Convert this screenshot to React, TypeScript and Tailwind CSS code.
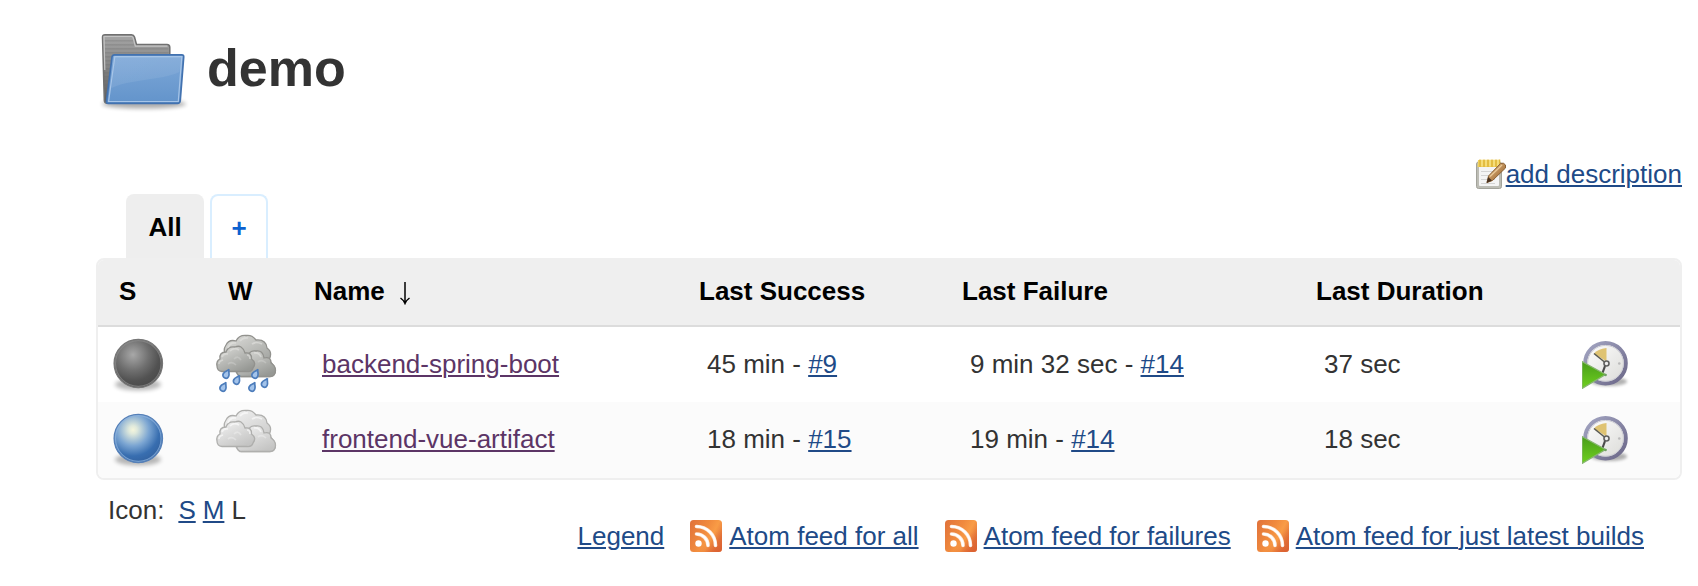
import React from "react";

const linkClass = "text-[#204a87] underline decoration-2 underline-offset-2";

function FolderIcon() {
  return (
    <svg viewBox="0 0 96 96" className="size-24 shrink-0" aria-hidden="true">
      <defs>
        <linearGradient id="folder-back" x1="0" y1="0" x2="0" y2="1">
          <stop offset="0" stopColor="#a6a6a6" />
          <stop offset="0.35" stopColor="#8c8c8c" />
          <stop offset="1" stopColor="#5c5c5c" />
        </linearGradient>
        <linearGradient id="folder-front" x1="0" y1="0" x2="0" y2="1">
          <stop offset="0" stopColor="#7ea8d8" />
          <stop offset="1" stopColor="#6394cb" />
        </linearGradient>
        <linearGradient id="folder-gloss" x1="0" y1="0" x2="1" y2="1">
          <stop offset="0" stopColor="#fff" stopOpacity="0.1" />
          <stop offset="1" stopColor="#fff" stopOpacity="0.06" />
        </linearGradient>
        <pattern id="folder-lines" width="4" height="4" patternUnits="userSpaceOnUse">
          <rect width="4" height="1.6" fill="#666" opacity="0.25" />
        </pattern>
        <filter id="folder-blur" x="-20%" y="-100%" width="140%" height="300%">
          <feGaussianBlur stdDeviation="2.2" />
        </filter>
      </defs>
      <ellipse cx="48" cy="84" rx="42" ry="4.5" fill="#000" opacity="0.32" filter="url(#folder-blur)" />
      <path d="M11 83.300 Q8.500 83.300 8.300 80.500 L6.500 17 Q6.500 14.800 9 14.800 H35.500 Q37.800 14.800 38.500 17 L40.500 24.500 H71 Q73.800 24.500 73.800 27.500 V81 Z" fill="url(#folder-back)" stroke="#707070" strokeWidth="1.500" />
      <path d="M8.500 70 L7.500 18 H37 L40 27 H72.500 V70 Z" fill="url(#folder-lines)" />
      <path d="M8.800 50 L8 16.500 H35.500 Q36.800 16.500 37.200 18 L39.300 26.200 H71.500" fill="none" stroke="#c4c4c4" strokeWidth="1.200" />
      <path d="M18.500 34.800 H85.800 Q87.900 34.800 87.700 36.800 L84.200 81 Q84 83.300 81.500 83.300 H12 Q10.300 83.300 10.500 81 L16 37 Q16.300 34.800 18.500 34.800 Z" fill="url(#folder-front)" stroke="#4272b0" strokeWidth="1.700" />
      <path d="M18.800 36.600 H85.800 L82.300 81.500 H12.600 Z" fill="none" stroke="#a7c5e8" strokeWidth="1.200" />
      <path d="M18.800 37 H85 L83.500 52 Q74 56 61 58 C43 61 28 62 15.500 68 Z" fill="url(#folder-gloss)" />
    </svg>
  );
}

function NotepadIcon() {
  return (
    <svg viewBox="0 0 32 32" className="size-8 shrink-0" aria-hidden="true">
      <defs>
        <linearGradient id="note-pencil" x1="0" y1="0" x2="1" y2="1">
          <stop offset="0.2" stopColor="#d9b07c" />
          <stop offset="0.8" stopColor="#a06a32" />
        </linearGradient>
      </defs>
      <rect x="2.500" y="4" width="25" height="26.500" rx="2" fill="#bdbdb5" stroke="#a3a39b" />
      <rect x="5" y="6" width="20" height="22" rx="1" fill="#f4f4f4" />
      <path d="M7 13.500H21M7 17.500H18M7 21.500H21M7 25.500H21" stroke="#d4d4d4" strokeWidth="1.200" />
      <path d="M4 2 H26 L26.500 9 H3.500 Z" fill="#efd15e" />
      <path d="M6 1.500V9M10 1.500V9M14 1.500V9M18 1.500V9M22 1.500V9M25.500 1.500V8" stroke="#e0b63a" strokeWidth="1.500" />
      <path d="M8 1.500V8M12 1.500V8M16 1.500V8M20 1.500V8M24 1.500V8" stroke="#f8e489" strokeWidth="1.300" />
      <path d="M13 24.500 L14.500 18 L26.500 5.500 Q29.500 4 31.500 7 V10 L18.500 22.500 Z" fill="url(#note-pencil)" stroke="#8a6135" />
      <path d="M16 18.500 L28 7" stroke="#e8c897" strokeWidth="1.400" />
      <path d="M12.500 25 L14.200 19 L18 22.500 Z" fill="#4a3320" />
    </svg>
  );
}

function BallIcon({ tone }: { tone: "gray" | "blue" }) {
  const blue = tone === "blue";
  const id = `ball-${tone}`;
  return (
    <svg viewBox="0 0 64 64" className="block size-16" role="img" aria-label={blue ? "Success" : "Disabled"}>
      <defs>
        <radialGradient id={id} cx="0.39" cy="0.32" r="0.66">
          <stop offset="0" stopColor={blue ? "#f5f6dc" : "#a8a8a8"} />
          <stop offset="0.13" stopColor={blue ? "#dfe9dc" : "#999"} />
          <stop offset="0.5" stopColor={blue ? "#7ba5d2" : "#6f6f6f"} />
          <stop offset="0.82" stopColor={blue ? "#386eb0" : "#525252"} />
          <stop offset="1" stopColor={blue ? "#3465a4" : "#4c4c4c"} />
        </radialGradient>
        <filter id={`${id}-blur`} x="-20%" y="-60%" width="140%" height="220%">
          <feGaussianBlur stdDeviation="2" />
        </filter>
      </defs>
      <ellipse cx="32" cy="51.500" rx="23" ry="6" fill="#000" opacity="0.28" filter={`url(#${id}-blur)`} />
      <circle cx="32.300" cy="30.500" r="24.200" fill={`url(#${id})`} stroke={blue ? "#5680b8" : "#777"} strokeWidth="1.300" />
      <circle cx="32.300" cy="30.500" r="22.800" fill="none" stroke={blue ? "#8fb4de" : "#8c8c8c"} strokeWidth="1.200" opacity="0.7" />
    </svg>
  );
}

function WeatherIcon({ rain }: { rain: boolean }) {
  const id = rain ? "cloud-rain" : "cloud-dry";
  const line = rain ? "#92928e" : "#afafad";
  const drops: number[][] = [[11.500, 41], [22, 47], [40.500, 41], [50, 50], [8.500, 54], [37.500, 54]];
  return (
    <svg viewBox="0 0 64 64" className="block size-16" role="img" aria-label={rain ? "Rain" : "Cloudy"}>
      <defs>
        <linearGradient id={id} x1="0" y1="0" x2="0.7" y2="1">
          <stop offset="0" stopColor={rain ? "#dededb" : "#f4f4f4"} />
          <stop offset="1" stopColor={rain ? "#969894" : "#c4c4c3"} />
        </linearGradient>
      </defs>
      <g transform="translate(-1 0)" fill={`url(#${id})`} stroke={line} strokeWidth="1.300">
        <path d="M13 24 Q8 18 12 12 Q15 6 22 8 Q25 2 32 2.500 Q38 1.500 42 7 Q52 6 53 15 Q59 19 55 27 L60 33 Q64 42 56 43.500 H26 L13 28 Z" />
        <path d="M23 37 Q22 31 28 30 Q28 24 34 24 Q35 17 42 18 Q49 17 50 25 Q57 23 57 30 Q63 34 61 40 Q60 43.500 56 43.500 H27 Q22 42 23 37 Z" />
        <path d="M3 33 Q2 28 6 26 Q5 19 12 19 Q14 13 21 14 Q28 11 31 20 Q38 19 37.500 26 Q43 30 39 35 Q38 39 33 38.500 H8 Q3 38 3 33 Z" />
      </g>
      <g transform="translate(-1 0)" fill="none" stroke={rain ? "#e4e4e1" : "#fff"} strokeWidth="1.700" opacity="0.6">
        <path d="M14 15 Q16 9 22 10 M26 8 Q29 4 34 5 M38 11 Q42 8 48 11" />
        <path d="M5 31 Q5 28 9 27 M8 24 Q9 20 14 21 M16 18 Q20 14 25 17 M33 22 Q36 22 36 26 M40 20 Q45 19 47 24" />
        <path d="M20 26 Q24 22 27 27 M14 31 Q18 28 22 32 M44 29 Q48 26 52 30" opacity="0.5" />
      </g>
      {rain && (
        <g fill="#a3c3ea" stroke="#4d7dbb" strokeWidth="1.700">
          {drops.map(([x, y]) => (
            <path key={`${x}-${y}`} transform={`translate(${x} ${y}) rotate(28)`} d="M0 -5.500 C0 -3 3 -2 3 1.300 A3 3 0 0 1 -3 1.300 C-3 -2 0 -3 0 -5.500 Z" />
          ))}
        </g>
      )}
    </svg>
  );
}

function BuildIcon() {
  return (
    <svg viewBox="0 0 48 48" className="block size-12" aria-hidden="true">
      <defs>
        <linearGradient id="clock-rim" x1="0" y1="0" x2="1" y2="1">
          <stop offset="0" stopColor="#a3a5c2" />
          <stop offset="1" stopColor="#6b6788" />
        </linearGradient>
        <linearGradient id="clock-face" x1="0" y1="0" x2="1" y2="1">
          <stop offset="0" stopColor="#fff" />
          <stop offset="1" stopColor="#dadad7" />
        </linearGradient>
        <linearGradient id="clock-play" x1="0" y1="0" x2="0" y2="1">
          <stop offset="0" stopColor="#489c19" />
          <stop offset="1" stopColor="#6fd01f" />
        </linearGradient>
        <filter id="clock-blur" x="-20%" y="-60%" width="140%" height="220%">
          <feGaussianBlur stdDeviation="1.800" />
        </filter>
      </defs>
      <ellipse cx="27" cy="40.500" rx="18" ry="4.500" fill="#000" opacity="0.3" filter="url(#clock-blur)" />
      <circle cx="23.500" cy="22.300" r="20.300" fill="url(#clock-face)" stroke="url(#clock-rim)" strokeWidth="4" />
      <circle cx="23.500" cy="22.300" r="17.900" fill="none" stroke="#cdcdd4" strokeWidth="1" />
      <path d="M24.500 20.500 L12 12.500 Q15.500 8 24.500 7 Z" fill="#dfc372" />
      <path d="M12 12.500 L22.500 21" stroke="#5a5a50" strokeWidth="1.600" />
      <path d="M23 25 L20.500 32" stroke="#4b4b4b" strokeWidth="2.200" />
      <circle cx="24.500" cy="22.500" r="2.500" fill="#eee" stroke="#5f5f5f" strokeWidth="1.600" />
      <circle cx="37.300" cy="22.500" r="1.300" fill="#bbb" />
      <path d="M0 20.500 L23.500 33.500 L0 47.500 Z" fill="url(#clock-play)" stroke="#86b56f" strokeWidth="1.300" />
      <circle cx="23.500" cy="34" r="1.300" fill="#6f9f63" />
    </svg>
  );
}

function FeedIcon() {
  return (
    <svg viewBox="0 0 32 32" className="size-8 shrink-0" aria-hidden="true">
      <defs>
        <linearGradient id="feed-bg" x1="0" y1="0" x2="1" y2="0.500">
          <stop offset="0" stopColor="#e0713a" />
          <stop offset="0.5" stopColor="#f08a3e" />
          <stop offset="0.75" stopColor="#f99c46" />
          <stop offset="1" stopColor="#e5793b" />
        </linearGradient>
        <linearGradient id="feed-shade" x1="0" y1="0" x2="1" y2="1">
          <stop offset="0.6" stopColor="#d95b2f" stopOpacity="0" />
          <stop offset="1" stopColor="#d95b2f" stopOpacity="0.9" />
        </linearGradient>
      </defs>
      <rect width="32" height="32" rx="3.500" fill="url(#feed-bg)" />
      <rect width="32" height="32" rx="3.500" fill="url(#feed-shade)" />
      <circle cx="8.500" cy="23.500" r="3.200" fill="#fff" />
      <path d="M6.500 14 A11.500 11.500 0 0 1 18 25.500 M6.500 6.500 A19 19 0 0 1 25.500 25.500" fill="none" stroke="#fde9dc" strokeWidth="3.600" strokeLinecap="round" />
      <path d="M6.500 14 A11.500 11.500 0 0 1 18 25.500 M6.500 6.500 A19 19 0 0 1 25.500 25.500" fill="none" stroke="#fff" strokeWidth="2" strokeLinecap="round" />
    </svg>
  );
}

interface Build {
  ago: string;
  number: string;
}

interface Job {
  name: string;
  tone: "gray" | "blue";
  rain: boolean;
  success: Build;
  failure: Build;
  duration: string;
}

const jobs: Job[] = [
  {
    name: "backend-spring-boot",
    tone: "gray",
    rain: true,
    success: { ago: "45 min", number: "#9" },
    failure: { ago: "9 min 32 sec", number: "#14" },
    duration: "37 sec",
  },
  {
    name: "frontend-vue-artifact",
    tone: "blue",
    rain: false,
    success: { ago: "18 min", number: "#15" },
    failure: { ago: "19 min", number: "#14" },
    duration: "18 sec",
  },
];

const feeds = ["Atom feed for all", "Atom feed for failures", "Atom feed for just latest builds"];

const headCell = "pb-1 pl-[21px]";
const bodyCell = "pb-0.5 pl-[29px]";

function BuildCell({ build }: { build: Build }) {
  return (
    <td className={bodyCell}>
      {build.ago} - <a href="#build" className={linkClass}>{build.number}</a>
    </td>
  );
}

export default function App() {
  return (
    <main className="bg-white pt-5 pr-4 pb-8 pl-24 font-['Liberation_Sans',Arial,sans-serif] text-[26px] leading-8 text-[#333]">
      <header className="flex items-center gap-[15px]">
        <FolderIcon />
        <h1 className="text-[52px] leading-[60px] font-bold">demo</h1>
      </header>

      <div className="mt-[42px] flex justify-end">
        <a href="#description" className="flex items-center text-[#204a87]">
          <NotepadIcon />
          <span className="underline decoration-2 underline-offset-2">add description</span>
        </a>
      </div>

      <nav className="mt-1 flex gap-1.5 pl-[30px] font-bold" aria-label="Views">
        <a href="#all" className="flex h-16 w-[78px] items-center justify-center rounded-t-lg bg-[#eee] pt-0.5 text-black">All</a>
        <a href="#new" className="flex h-16 w-[58px] items-center justify-center rounded-t-lg border-2 border-b-0 border-[#d9eeff] pt-0.5 text-[#0b61d0]">+</a>
      </nav>

      <div className="overflow-hidden rounded-lg border-2 border-[#efefef]">
        <table className="w-full table-fixed border-collapse text-left whitespace-nowrap">
          <colgroup>
            <col className="w-[109px]" />
            <col className="w-[86px]" />
            <col className="w-[385px]" />
            <col className="w-[263px]" />
            <col className="w-[354px]" />
            <col className="w-[259px]" />
            <col className="w-[126px]" />
          </colgroup>
          <thead>
            <tr className="h-[66px] border-b-2 border-[#dcdcdc] bg-[#efefef] text-black">
              <th className={headCell}>S</th>
              <th className={headCell}>W</th>
              <th className={headCell} aria-sort="ascending">
                <span className="flex items-center gap-3.5">
                  Name
                  <svg viewBox="0 0 12 28" className="h-7 w-3" fill="none" stroke="#000" strokeWidth="1.500" aria-hidden="true">
                    <path d="M6 5V26M1.500 21Q4.500 23 6 26.500Q7.500 23 10.500 21" />
                  </svg>
                </span>
              </th>
              <th className={headCell}>Last Success</th>
              <th className={headCell}>Last Failure</th>
              <th className={headCell}>Last Duration</th>
              <th aria-label="Actions" />
            </tr>
          </thead>
          <tbody>
            {jobs.map((job) => (
              <tr key={job.name} className="h-[76px] even:bg-[#fbfbfb]">
                <td className="pl-2"><BallIcon tone={job.tone} /></td>
                <td className="pl-2"><WeatherIcon rain={job.rain} /></td>
                <td className={bodyCell}>
                  <a href="#job" className="text-[#5c3566] underline decoration-2 underline-offset-2">{job.name}</a>
                </td>
                <BuildCell build={job.success} />
                <BuildCell build={job.failure} />
                <td className={bodyCell}>{job.duration}</td>
                <td className="pl-7">
                  <button type="button" className="block" aria-label={`Schedule a build for ${job.name}`}>
                    <BuildIcon />
                  </button>
                </td>
              </tr>
            ))}
          </tbody>
        </table>
      </div>

      <footer className="flex items-start justify-between pt-3.5 pr-[38px] pl-3">
        <div className="flex gap-[7px]">
          <span className="mr-[7px]">Icon:</span>
          <a href="#small" className={linkClass}>S</a>
          <a href="#medium" className={linkClass}>M</a>
          <span>L</span>
        </div>
        <div className="flex items-center gap-[26px] pt-[26px]">
          <a href="#legend" className={linkClass}>Legend</a>
          {feeds.map((feed) => (
            <a key={feed} href="#feed" className="flex items-center gap-[7px] text-[#204a87]">
              <FeedIcon />
              <span className="underline decoration-2 underline-offset-2">{feed}</span>
            </a>
          ))}
        </div>
      </footer>
    </main>
  );
}
